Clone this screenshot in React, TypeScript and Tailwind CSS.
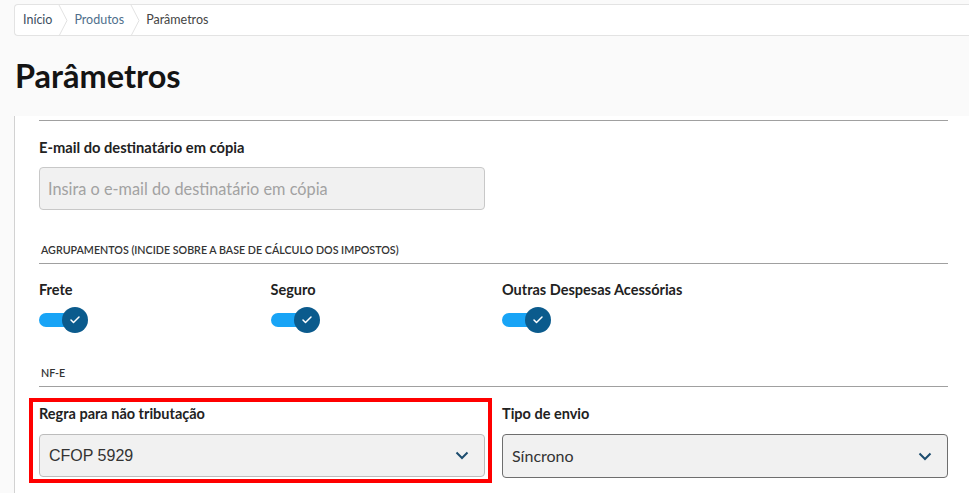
import { Check } from "lucide-react";

const font = { fontFamily: "Lato, 'Noto Sans', sans-serif" };

function Crumb({ label, color, last }: { label: string; color: string; last?: boolean }) {
  return (
    <div className="flex h-full items-center">
      <span className={`text-[12.5px] ${color}`}>{label}</span>
      {!last && (
        <svg width="10" height="31" viewBox="0 0 10 31" className="mx-[6px]">
          <path d="M1 0 L9 15.5 L1 31" fill="none" stroke="#e2e2e2" strokeWidth="1" />
        </svg>
      )}
    </div>
  );
}

function Toggle() {
  return (
    <div className="relative h-[26px] w-[49px]">
      <div className="absolute left-0 top-[6px] h-[14px] w-[42px] rounded-full bg-[#18a4f6]" />
      <div className="absolute left-[23px] top-0 flex size-[26px] items-center justify-center rounded-full bg-[#0b5b8d]">
        <Check className="size-[12px] text-white" strokeWidth={3} />
      </div>
    </div>
  );
}

function Chevron() {
  return (
    <svg width="14" height="9" viewBox="0 0 14 9">
      <path d="M1.5 1.5 L7 7 L12.5 1.5" fill="none" stroke="#1d4d6f" strokeWidth="2" />
    </svg>
  );
}

function SectionTitle({ children }: { children: string }) {
  return (
    <div className="border-b border-[#a0a0a0] pb-[6px] pl-[2px]">
      <span className="block text-[10.7px] leading-[14px] font-semibold text-[#333]">{children}</span>
    </div>
  );
}

export default function App() {
  return (
    <div className="min-h-screen bg-[#fafafa] pl-[14px] pt-[4px]" style={font}>
      <div className="flex h-[32px] items-center rounded-l border border-r-0 border-[#e3e3e3] bg-white pl-[8px]">
        <Crumb label="Início" color="text-[#3d4f60]" />
        <Crumb label="Produtos" color="text-[#4f6f8c]" />
        <Crumb label="Parâmetros" color="text-[#444]" last />
      </div>

      <h1 className="mt-[19px] mb-[19px] pl-[1px] text-[32.5px] leading-[42px] font-bold text-[#141414]">
        Parâmetros
      </h1>

      <div className="border-l border-[#d2d2d2] bg-white pl-[24px] pr-[21px] pt-[4px] pb-[20px]">
        <div className="border-t border-[#a0a0a0]" />

        <div className="mt-[16px] text-[14.7px] leading-[20px] font-bold text-[#222]">
          E-mail do destinatário em cópia
        </div>
        <div className="mt-[10px] grid grid-cols-2 gap-[17px]">
          <input
            placeholder="Insira o e-mail do destinatário em cópia"
            className="h-[43px] rounded-[4px] border border-[#c8c8c8] bg-[#f1f1f1] px-[8px] text-[16.3px] text-[#333] placeholder:text-[#a2a2a2] outline-none"
          />
        </div>

        <div className="mt-[33px]">
          <SectionTitle>AGRUPAMENTOS (INCIDE SOBRE A BASE DE CÁLCULO DOS IMPOSTOS)</SectionTitle>
        </div>

        <div className="mt-[16px] grid grid-cols-4 gap-[17px]">
          {["Frete", "Seguro", "Outras Despesas Acessórias"].map((l) => (
            <div key={l}>
              <div className="text-[14.5px] leading-[20px] font-bold text-[#222]">{l}</div>
              <div className="mt-[7px]">
                <Toggle />
              </div>
            </div>
          ))}
        </div>

        <div className="mt-[33px]">
          <SectionTitle>NF-E</SectionTitle>
        </div>

        <div className="mt-[11px] grid grid-cols-2 gap-[17px]">
          <div className="-ml-[10px] -mr-[7px] border-4 border-[#ff0000] pl-[6px] pr-[3px] pt-[2px] pb-[2px]">
            <div className="text-[14.5px] leading-[20px] font-bold text-[#222]">Regra para não tributação</div>
            <div className="mt-[10px] flex h-[43px] items-center justify-between rounded-[4px] border border-[#bcbcbc] bg-[#f1f1f1] pl-[9px] pr-[15px]">
              <span className="text-[16px] text-[#333]" style={{ fontFamily: "'Liberation Sans', Arial, sans-serif" }}>CFOP 5929</span>
              <Chevron />
            </div>
          </div>
          <div className="pt-[6px]">
            <div className="text-[14.5px] leading-[20px] font-bold text-[#222]">Tipo de envio</div>
            <div className="mt-[10px] flex h-[44px] items-center justify-between rounded-[4px] border border-[#6e6e6e] bg-[#f1f1f1] pl-[9px] pr-[15px]">
              <span className="text-[16px] text-[#333]">Síncrono</span>
              <Chevron />
            </div>
          </div>
        </div>
      </div>
    </div>
  );
}
